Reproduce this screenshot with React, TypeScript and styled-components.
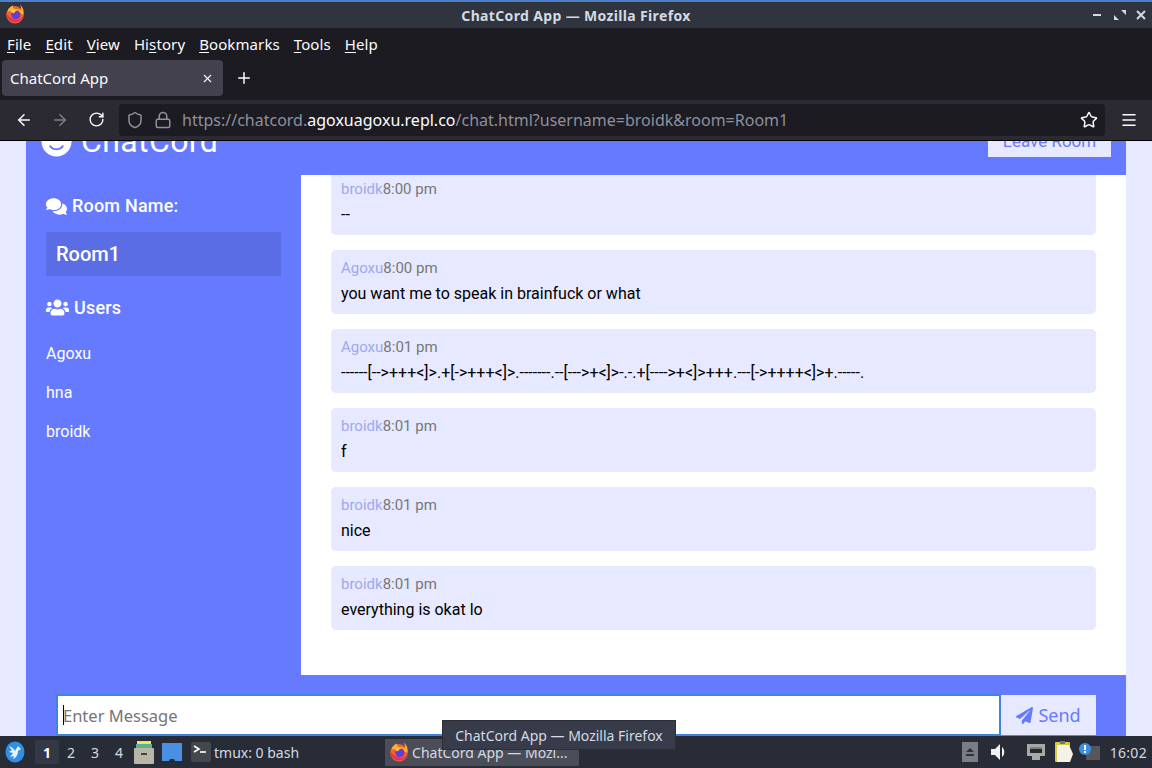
import styled, { createGlobalStyle } from "styled-components";
import { FaComments, FaPaperPlane, FaSmile, FaUsers } from "react-icons/fa";
import { ArrowLeft, ArrowRight, Lock, Menu, Plus, RotateCw, Shield, Star, X } from "lucide-react";

const GlobalStyle = createGlobalStyle`
    html, body {
        margin: 0;
        padding: 0;
        height: 100%;
        overflow: hidden;
    }
    * {
        box-sizing: border-box;
    }
`;

const Screen = styled.div`
    width: 1152px;
    height: 768px;
    display: flex;
    flex-direction: column;
    position: relative;
    overflow: hidden;
    font-family: "Noto Sans", sans-serif;
    background: #1c1b22;
`;

const TitleBar = styled.div`
    height: 28px;
    flex: none;
    border-top: 2px solid #4a80c8;
    background: #2f343f;
    display: flex;
    align-items: center;
    justify-content: center;
    position: relative;
    color: #d3dae3;
    font-size: 14px;
    font-weight: 700;
    letter-spacing: 0.35px;
`;

const TitleLogo = styled.div`
    position: absolute;
    left: 5px;
    top: 2px;
    display: flex;
`;

const WindowButtons = styled.div`
    position: absolute;
    right: 3px;
    top: 5px;
    display: flex;
    gap: 5px;
`;

const MenuBar = styled.div`
    height: 32px;
    flex: none;
    display: flex;
    align-items: center;
    padding-left: 7px;
    gap: 14px;
    color: #fbfbfe;
    font-size: 15px;
`;

const MenuItem = styled.span`
    letter-spacing: 0.1px;
    u {
        text-underline-offset: 2px;
    }
`;

const TabStrip = styled.div`
    height: 40px;
    flex: none;
    display: flex;
    align-items: flex-start;
    padding-left: 2px;
    color: #fbfbfe;
`;

const Tab = styled.div`
    width: 221px;
    height: 36px;
    background: #42414d;
    border-radius: 4px;
    display: flex;
    align-items: center;
    justify-content: space-between;
    padding: 0 9px 0 8px;
    font-size: 15px;
`;

const NewTab = styled.div`
    width: 42px;
    height: 36px;
    display: flex;
    align-items: center;
    justify-content: center;
`;

const Toolbar = styled.div`
    height: 41px;
    flex: none;
    background: #2b2a33;
    border-bottom: 1px solid #000;
    display: flex;
    align-items: center;
    color: #fbfbfe;
    padding-bottom: 1px;
`;

const NavButton = styled.div<{ $dim?: boolean }>`
    width: 36px;
    height: 32px;
    display: flex;
    align-items: center;
    justify-content: center;
    opacity: ${(props) => (props.$dim ? 0.4 : 1)};
`;

const NavGroup = styled.div`
    display: flex;
    padding-left: 6px;
    margin-right: 5px;
`;

const UrlBar = styled.div`
    width: 986px;
    height: 32px;
    background: #1c1b22;
    border-radius: 4px;
    display: flex;
    align-items: center;
    padding: 0 7px 0 7px;
    font-size: 16px;
    color: #8f8f9d;
`;

const UrlIcons = styled.div`
    display: flex;
    align-items: center;
    gap: 10px;
    margin-right: 10px;
`;

const UrlText = styled.div`
    flex: 1;
    white-space: nowrap;
    b {
        font-weight: 400;
        color: #fbfbfe;
    }
`;

const Hamburger = styled.div`
    flex: 1;
    display: flex;
    justify-content: center;
    padding-left: 0;
`;

const Page = styled.div`
    flex: 1;
    min-height: 0;
    background: #e6e9ff;
    padding: 0 26px;
    display: flex;
    flex-direction: column;
    overflow: hidden;
    font-family: Roboto, sans-serif;
`;

const ChatHeader = styled.header`
    height: 68px;
    margin-top: -34px;
    flex: none;
    background: #667aff;
    display: flex;
    align-items: center;
    justify-content: space-between;
    padding: 0 15px;
    color: #fff;
`;

const Brand = styled.h1`
    margin: 0;
    font-size: 32px;
    font-weight: 400;
    line-height: 40px;
    display: flex;
    align-items: center;
    gap: 9px;
    letter-spacing: 0.4px;
`;

const LeaveButton = styled.div`
    width: 123px;
    height: 32px;
    background: #e6e9ff;
    color: #667aff;
    font-size: 17px;
    display: flex;
    align-items: center;
    justify-content: center;
`;

const ChatMain = styled.main`
    flex: none;
    height: 500px;
    display: grid;
    grid-template-columns: 275px 1fr;
    background: #fff;
`;

const Sidebar = styled.aside`
    background: #667aff;
    color: #fff;
    padding: 20px;
`;

const SideTitle = styled.h3`
    margin: 0 0 15px;
    font-size: 18px;
    line-height: 22px;
    font-weight: 500;
    letter-spacing: 0.2px;
    display: flex;
    align-items: center;
    gap: 5px;
`;

const RoomName = styled.h2`
    margin: 0 0 20px;
    height: 44px;
    padding: 0 10px;
    background: rgba(0, 0, 0, 0.1);
    font-size: 20px;
    font-weight: 500;
    line-height: 44px;
`;

const UserList = styled.ul`
    list-style: none;
    margin: 23px 0 0;
    padding: 0;
    font-size: 16px;
`;

const UserItem = styled.li`
    height: 39px;
    line-height: 24px;
`;

const Messages = styled.div`
    height: 500px;
    overflow: hidden;
    padding: 30px;
    padding-bottom: 45px;
    display: flex;
    flex-direction: column;
    justify-content: flex-end;
    gap: 15px;
`;

const Message = styled.div`
    flex: none;
    height: 64px;
    padding: 9px 10px;
    background: #e6e9ff;
    border-radius: 5px;
`;

const Meta = styled.p`
    margin: 0 0 6px;
    font-size: 15px;
    line-height: 18px;
    color: #777;
    span {
        color: #9fa8f0;
    }
`;

const MessageText = styled.p`
    margin: 0;
    font-size: 16px;
    line-height: 22px;
    color: #000;
    white-space: nowrap;
`;

const FormBar = styled.div`
    flex: none;
    height: 65px;
    background: #667aff;
    padding: 19px 30px 0;
    display: flex;
    align-items: flex-start;
`;

const MessageInput = styled.div`
    flex: 1;
    height: 42px;
    background: #fff;
    border: 2px solid #3d85e0;
    border-radius: 2px;
    display: flex;
    align-items: center;
    padding-left: 5px;
    font-family: "Noto Sans", sans-serif;
    font-size: 16.5px;
    color: #757575;
`;

const Caret = styled.i`
    width: 1px;
    height: 20px;
    background: #000;
    margin-right: -1px;
`;

const SendButton = styled.div`
    width: 95px;
    height: 40px;
    margin-top: 1px;
    background: #e6e9ff;
    color: #667aff;
    font-family: "Noto Sans", sans-serif;
    font-size: 18px;
    display: flex;
    align-items: center;
    justify-content: center;
    gap: 5px;
`;

const Taskbar = styled.div`
    height: 32px;
    flex: none;
    background: #282c36;
    display: flex;
    align-items: center;
    color: #d3dae3;
    font-size: 14px;
    padding-left: 5px;
`;

const StartIcon = styled.div`
    width: 21px;
    height: 24px;
    margin-right: 9px;
    display: flex;
    align-items: center;
`;

const Workspace = styled.div<{ $active?: boolean }>`
    width: 24px;
    height: 24px;
    display: flex;
    align-items: center;
    justify-content: center;
    border-radius: 2px;
    font-weight: ${(props) => (props.$active ? 700 : 400)};
    color: ${(props) => (props.$active ? "#fff" : "#d3dae3")};
    background: ${(props) => (props.$active ? "#343844" : "transparent")};
`;

const Launchers = styled.div`
    display: flex;
    align-items: center;
    gap: 8px;
    margin: 0 0 0 3px;
`;

const TaskButton = styled.div<{ $active?: boolean }>`
    height: 27px;
    display: flex;
    align-items: center;
    gap: 3px;
    white-space: nowrap;
    width: ${(props) => (props.$active ? "194px" : "auto")};
    background: ${(props) => (props.$active ? "#4b4e58" : "transparent")};
    padding-left: ${(props) => (props.$active ? "4px" : "0")};
    margin-left: ${(props) => (props.$active ? "86px" : "9px")};
`;

const Tray = styled.div`
    margin-left: auto;
    display: flex;
    align-items: center;
    padding-right: 5px;
    font-size: 14px;
`;

const TrayBox = styled.div`
    width: 16px;
    height: 20px;
    background: #7a7d84;
    display: flex;
    align-items: center;
    justify-content: center;
    margin-right: 12px;
`;

const Clock = styled.span`
    margin-left: 10px;
    letter-spacing: 0.3px;
`;

const Tooltip = styled.div`
    position: absolute;
    left: 442px;
    top: 720px;
    width: 234px;
    height: 30px;
    background: #383c4a;
    border: 1px solid #2b2e39;
    color: #d3dae3;
    font-size: 14px;
    display: flex;
    align-items: center;
    justify-content: center;
    white-space: nowrap;
`;

function FirefoxLogo({ size }: { size: number }) {
    return (
        <svg width={size} height={size} viewBox="0 0 24 24">
            <circle cx="12" cy="13" r="10.5" fill="#f2622e" />
            <path d="M3 9c1-4 4-7 7-7-1 2 0 3 2 4 3 0 5 0 7 2 1-2 0-5-1-7 4 3 5 8 4 12L12 8z" fill="#ffb02e" />
            <path d="M2 12c0 6 5 10 10 10 5 0 9-3 10-8-2 4-6 6-10 5-4-1-7-3-10-7z" fill="#e8304f" />
            <circle cx="13" cy="13" r="5.5" fill="#6a3bd0" />
            <path d="M7 9c3-2 6-2 8-1-2 0-4 1-4 3-2 0-3-1-4-2z" fill="#ffcf3a" />
        </svg>
    );
}

function StartLogo() {
    return (
        <svg width="20" height="22" viewBox="0 0 20 22">
            <ellipse cx="10" cy="11" rx="9.5" ry="10.5" fill="#2f8fe6" />
            <path d="M4 5c3 1 5 3 6 5l3-5 1 1 2 2-3 2c0 4-2 7-5 8l1-3-4 1 3-4-4-1 3-2C6 8 5 7 4 5z" fill="#e8f2fb" />
        </svg>
    );
}

function CabinetIcon() {
    return (
        <svg width="20" height="24" viewBox="0 0 20 24">
            <rect x="3" y="1" width="14" height="4" fill="#f4e06a" />
            <rect x="2" y="4" width="16" height="4" fill="#55b58c" />
            <rect x="0" y="8" width="20" height="16" rx="1" fill="#b9b6a8" />
            <rect x="7" y="13" width="6" height="2" fill="#44423c" />
        </svg>
    );
}

function FolderIcon() {
    return (
        <svg width="20" height="20" viewBox="0 0 20 20">
            <path d="M0 1h20v18h-7l-1-2H8l-1 2H0z" fill="#4a90e2" />
        </svg>
    );
}

function TerminalIcon() {
    return (
        <svg width="20" height="20" viewBox="0 0 20 20">
            <rect width="20" height="20" rx="2" fill="#44474c" />
            <path d="M3 4l5 3-5 3" fill="none" stroke="#fff" strokeWidth="1.6" />
            <path d="M9 10h6" stroke="#fff" strokeWidth="1.6" />
        </svg>
    );
}

function SpeakerIcon() {
    return (
        <svg width="18" height="18" viewBox="0 0 18 18">
            <path d="M1 6h4l5-5v16l-5-5H1z" fill="#f2f2f2" />
            <path d="M12 4c3 2 3 8 0 10z" fill="#f2f2f2" />
        </svg>
    );
}

function NetworkIcon() {
    return (
        <svg width="20" height="18" viewBox="0 0 20 18">
            <path d="M1 1h18v12h-5v4H6v-4H1z" fill="#a8a8a4" />
            <rect x="4" y="4" width="12" height="6" fill="#26282e" />
            <path d="M5 4v2M7 4v2M9 4v2M11 4v2M13 4v2M15 4v2" stroke="#d8d8d2" strokeWidth="1" />
        </svg>
    );
}

function ClipboardIcon() {
    return (
        <svg width="20" height="24" viewBox="0 0 20 24">
            <rect x="1" y="2" width="15" height="20" rx="1" fill="#d9c93f" />
            <path d="M3 5h12l4 9-3 8H3z" fill="#f4f1e6" />
            <rect x="6" y="1" width="5" height="3" fill="#77776d" />
        </svg>
    );
}

function NoticeIcon() {
    return (
        <svg width="22" height="20" viewBox="0 0 22 20">
            <rect x="8" y="4" width="14" height="14" fill="#55575a" />
            <circle cx="7" cy="7" r="6" fill="#3d8fe0" />
            <rect x="6" y="3" width="2" height="5" fill="#fff" />
            <rect x="6" y="9" width="2" height="2" fill="#fff" />
        </svg>
    );
}

const messages = [
    { user: "broidk", time: "8:00 pm", text: "--" },
    { user: "Agoxu", time: "8:00 pm", text: "you want me to speak in brainfuck or what" },
    {
        user: "Agoxu",
        time: "8:01 pm",
        text: "------[-->+++<]>.+[->+++<]>.-------.--[--->+<]>-.-.+[---->+<]>+++.---[->++++<]>+.-----.",
    },
    { user: "broidk", time: "8:01 pm", text: "f" },
    { user: "broidk", time: "8:01 pm", text: "nice" },
    { user: "broidk", time: "8:01 pm", text: "everything is okat lo" },
];

const users = ["Agoxu", "hna", "broidk"];

export default function App() {
    return (
        <Screen>
            <GlobalStyle />
            <TitleBar>
                <TitleLogo>
                    <FirefoxLogo size={20} />
                </TitleLogo>
                ChatCord App — Mozilla Firefox
                <WindowButtons>
                    <svg width="16" height="16" viewBox="0 0 16 16">
                        <rect x="2" y="7" width="8" height="2" fill="#d3dae3" />
                    </svg>
                    <svg width="16" height="16" viewBox="0 0 16 16">
                        <path d="M9 3h5v5zM2 8l5 5H2z" fill="#d3dae3" />
                    </svg>
                    <svg width="16" height="16" viewBox="0 0 16 16">
                        <path d="M4 4l8 8M12 4l-8 8" stroke="#d3dae3" strokeWidth="2" />
                    </svg>
                </WindowButtons>
            </TitleBar>
            <MenuBar>
                <MenuItem><u>F</u>ile</MenuItem>
                <MenuItem><u>E</u>dit</MenuItem>
                <MenuItem><u>V</u>iew</MenuItem>
                <MenuItem>Hi<u>s</u>tory</MenuItem>
                <MenuItem><u>B</u>ookmarks</MenuItem>
                <MenuItem><u>T</u>ools</MenuItem>
                <MenuItem><u>H</u>elp</MenuItem>
            </MenuBar>
            <TabStrip>
                <Tab>
                    ChatCord App
                    <X size={13} />
                </Tab>
                <NewTab>
                    <Plus size={18} />
                </NewTab>
            </TabStrip>
            <Toolbar>
                <NavGroup>
                    <NavButton><ArrowLeft size={18} /></NavButton>
                    <NavButton $dim><ArrowRight size={18} /></NavButton>
                    <NavButton><RotateCw size={17} /></NavButton>
                </NavGroup>
                <UrlBar>
                    <UrlIcons>
                        <Shield size={18} />
                        <Lock size={18} />
                    </UrlIcons>
                    <UrlText>
                        https://chatcord.<b>agoxuagoxu.repl.co</b>/chat.html?username=broidk&amp;room=Room1
                    </UrlText>
                    <Star size={18} color="#fbfbfe" />
                </UrlBar>
                <Hamburger>
                    <Menu size={18} />
                </Hamburger>
            </Toolbar>
            <Page>
                <ChatHeader>
                    <Brand>
                        <FaSmile size={31} />
                        ChatCord
                    </Brand>
                    <LeaveButton>Leave Room</LeaveButton>
                </ChatHeader>
                <ChatMain>
                    <Sidebar>
                        <SideTitle>
                            <FaComments size={21} />
                            Room Name:
                        </SideTitle>
                        <RoomName>Room1</RoomName>
                        <SideTitle>
                            <FaUsers size={23} />
                            Users
                        </SideTitle>
                        <UserList>
                            {users.map((user) => (
                                <UserItem key={user}>{user}</UserItem>
                            ))}
                        </UserList>
                    </Sidebar>
                    <Messages>
                        {messages.map((message, index) => (
                            <Message key={index}>
                                <Meta>
                                    <span>{message.user}</span>
                                    {message.time}
                                </Meta>
                                <MessageText>{message.text}</MessageText>
                            </Message>
                        ))}
                    </Messages>
                </ChatMain>
                <FormBar>
                    <MessageInput>
                        <Caret />
                        Enter Message
                    </MessageInput>
                    <SendButton>
                        <FaPaperPlane size={17} />
                        Send
                    </SendButton>
                </FormBar>
            </Page>
            <Taskbar>
                <StartIcon>
                    <StartLogo />
                </StartIcon>
                <Workspace $active>1</Workspace>
                <Workspace>2</Workspace>
                <Workspace>3</Workspace>
                <Workspace>4</Workspace>
                <Launchers>
                    <CabinetIcon />
                    <FolderIcon />
                </Launchers>
                <TaskButton>
                    <TerminalIcon />
                    tmux: 0 bash
                </TaskButton>
                <TaskButton $active>
                    <FirefoxLogo size={20} />
                    ChatCord App — Mozi...
                </TaskButton>
                <Tray>
                    <TrayBox>
                        <svg width="10" height="8" viewBox="0 0 10 8">
                            <path d="M5 0l4 4H1zM1 6h8v2H1z" fill="#2f323a" />
                        </svg>
                    </TrayBox>
                    <SpeakerIcon />
                    <span style={{ width: 18 }} />
                    <NetworkIcon />
                    <span style={{ width: 8 }} />
                    <ClipboardIcon />
                    <span style={{ width: 4 }} />
                    <NoticeIcon />
                    <Clock>16:02</Clock>
                </Tray>
            </Taskbar>
            <Tooltip>ChatCord App — Mozilla Firefox</Tooltip>
        </Screen>
    );
}
